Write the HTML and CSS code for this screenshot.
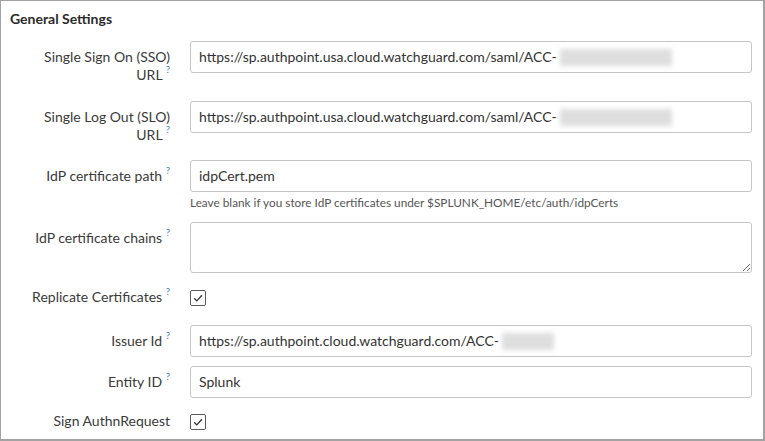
FILE: index.html
```html
<!DOCTYPE html>
<html>
<head>
<meta charset="utf-8">
<link rel="stylesheet" href="styles.css">
</head>
<body>
<div class="page">
  <h2 class="title">General Settings</h2>
  <div class="form">
    <div class="row row-sso">
      <div class="label">Single Sign On (SSO)<br>URL <sup class="q">?</sup></div>
      <div class="control">
        <div class="input">https://sp.authpoint.usa.cloud.watchguard.com/saml/ACC-<span class="redact r1"></span></div>
      </div>
    </div>
    <div class="row row-slo">
      <div class="label">Single Log Out (SLO)<br>URL <sup class="q">?</sup></div>
      <div class="control">
        <div class="input">https://sp.authpoint.usa.cloud.watchguard.com/saml/ACC-<span class="redact r1"></span></div>
      </div>
    </div>
    <div class="row row-path">
      <div class="label">IdP certificate path <sup class="q">?</sup></div>
      <div class="control">
        <div class="input">idpCert.pem</div>
        <div class="help">Leave blank if you store IdP certificates under $SPLUNK_HOME/etc/auth/idpCerts</div>
      </div>
    </div>
    <div class="row row-chain">
      <div class="label">IdP certificate chains <sup class="q">?</sup></div>
      <div class="control">
        <textarea class="textarea"></textarea>
      </div>
    </div>
    <div class="row row-check row-rep">
      <div class="label">Replicate Certificates <sup class="q">?</sup></div>
      <div class="control">
        <span class="checkbox"><svg width="12" height="12" viewBox="0 0 12 12"><path d="M2.2 6.3 L4.8 8.9 L9.9 3.2" fill="none" stroke="#333" stroke-width="1.3"/></svg></span>
      </div>
    </div>
    <div class="row row-issuer">
      <div class="label">Issuer Id <sup class="q">?</sup></div>
      <div class="control">
        <div class="input">https://sp.authpoint.cloud.watchguard.com/ACC-<span class="redact r2"></span></div>
      </div>
    </div>
    <div class="row row-entity">
      <div class="label">Entity ID <sup class="q">?</sup></div>
      <div class="control">
        <div class="input">Splunk</div>
      </div>
    </div>
    <div class="row row-check row-sign">
      <div class="label">Sign AuthnRequest</div>
      <div class="control">
        <span class="checkbox"><svg width="12" height="12" viewBox="0 0 12 12"><path d="M2.2 6.3 L4.8 8.9 L9.9 3.2" fill="none" stroke="#333" stroke-width="1.3"/></svg></span>
      </div>
    </div>
  </div>
</div>
</body>
</html>
```
FILE: styles.css
```css
html, body {
  margin: 0;
  padding: 0;
  background: #fff;
}
body {
  font-family: Lato, "Open Sans", sans-serif;
  color: #333;
}
.page {
  box-sizing: border-box;
  width: 765px;
  height: 441px;
  border: 1px solid #a3a3a3;
  border-bottom-width: 2px;
  border-right-width: 2px;
  padding: 8px 11px 0 9px;
  overflow: hidden;
}
.title {
  margin: 0;
  font-size: 14px;
  font-weight: 700;
  line-height: 20px;
  color: #2b2b2b;
}
.form {
  margin-top: 12px;
  display: flex;
  flex-direction: column;
}
.row {
  display: flex;
  align-items: flex-start;
}
.label {
  box-sizing: border-box;
  width: 180px;
  flex: none;
  padding: 7px 20px 0 10px;
  text-align: right;
  white-space: nowrap;
  font-size: 14px;
  line-height: 18px;
  color: #3a3a3a;
}
.q {
  font-size: 9.5px;
  color: #3c84c2;
  vertical-align: top;
  position: relative;
  top: -1px;
  line-height: 9px;
}
.control {
  flex: 1;
  display: flex;
  flex-direction: column;
}
.input {
  box-sizing: border-box;
  height: 32px;
  border: 1px solid #c6c6c6;
  border-radius: 3px;
  padding: 0 8px;
  font-size: 14px;
  line-height: 30px;
  color: #333;
  white-space: nowrap;
  overflow: hidden;
}
.redact {
  display: inline-block;
  height: 17px;
  vertical-align: -4px;
  margin-left: 3px;
  background: #dedede;
  filter: blur(2.5px);
}
.r1 { width: 112px; }
.r2 { width: 52px; }
.help {
  margin-top: 3px;
  font-size: 11.8px;
  line-height: 16px;
  color: #555;
  white-space: nowrap;
}
.textarea {
  box-sizing: border-box;
  height: 51px;
  border: 1px solid #c6c6c6;
  border-radius: 3px;
  resize: vertical;
  margin: 0;
  font-family: inherit;
  display: block;
  width: 100%;
}
.row-slo { margin-top: 17px; }
.row-path { margin-top: 16px; }
.row-chain { margin-top: 11px; }
.row-rep { margin-top: 15px; }
.row-issuer { margin-top: 19px; }
.row-entity { margin-top: 9px; }
.row-sign { margin-top: 14px; }
.row-check .label { padding-top: 0; }
.checkbox {
  box-sizing: border-box;
  width: 16px;
  height: 16px;
  margin-top: 2px;
  border: 1px solid #5a5a5a;
  border-radius: 2px;
  display: flex;
  align-items: center;
  justify-content: center;
}
```
